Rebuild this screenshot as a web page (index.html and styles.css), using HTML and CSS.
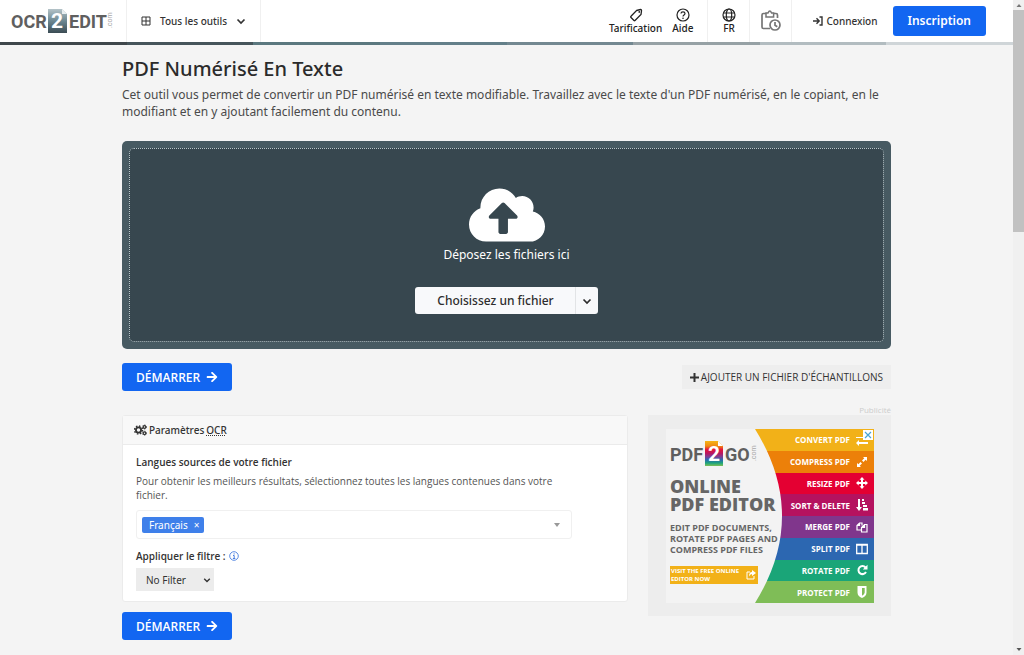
FILE: index.html
```html
<!DOCTYPE html>
<html lang="fr">
<head>
<meta charset="utf-8">
<title>PDF Numérisé En Texte</title>
<link rel="stylesheet" href="styles.css">
</head>
<body>
<svg class="defs" aria-hidden="true">
  <symbol id="arrow" viewBox="0 0 448 512"><path fill="currentColor" d="M190.500 66.900l22.200-22.200c9.400-9.400 24.600-9.400 33.900 0L441 239c9.400 9.400 9.400 24.600 0 33.900L246.600 467.300c-9.400 9.400-24.600 9.400-33.900 0l-22.200-22.200c-9.500-9.500-9.300-25 .4-34.300L311.400 296H24c-13.300 0-24-10.700-24-24v-32c0-13.300 10.700-24 24-24h287.400L190.900 101.200c-9.800-9.300-10-24.800-.4-34.300z"/></symbol>
  <symbol id="chevron" viewBox="0 0 10 10"><path d="M1.500 3.500 5 7l3.500-3.500" fill="none" stroke="currentColor" stroke-width="1.700"/></symbol>
</svg>
<div class="app">
  <div class="view">
    <header class="topbar">
      <a class="logo" href="#" aria-label="OCR2EDIT.com">
        <svg viewBox="0 0 104 26" width="104" height="26">
          <defs><linearGradient id="tile" x1="0" y1="0" x2="0" y2="1"><stop offset="0" stop-color="#b4c3c8"/><stop offset=".5" stop-color="#6c8791"/><stop offset="1" stop-color="#3b4c54"/></linearGradient></defs>
          <text x="1" y="20" class="logo-word">OCR</text>
          <path d="M38 1h14l5 5v19H38z" fill="url(#tile)"/><path d="M52 1v5h5z" fill="#e8eef0"/>
          <text x="47" y="20" text-anchor="middle" class="logo-digit">2</text>
          <text x="59" y="20" class="logo-word">EDIT</text>
          <text transform="translate(102 20) rotate(-90)" class="logo-com">.com</text>
        </svg>
      </a>
      <button class="tools" type="button">
        <svg width="10" height="10" viewBox="0 0 10 10"><path d="M1 1h8v8H1zM5 1v8M1 5h8" fill="none" stroke="currentColor"/></svg>
        <span>Tous les outils</span>
        <svg width="10" height="10"><use href="#chevron"/></svg>
      </button>
      <nav class="actions">
        <div class="links">
          <a href="#" class="stack"><svg width="14" height="14" viewBox="0 0 14 14"><path d="M7.500 2.500 11.500 1.500Q12.700 1.500 12.500 3L12 6.500 6 12.500Q5.500 13 5 12.500L2 9.500Q1.400 8.900 2 8.300z" fill="none" stroke="currentColor" stroke-width="1.300"/><circle cx="10.300" cy="3.900" r=".9" fill="currentColor"/></svg><span>Tarification</span></a>
          <a href="#" class="stack"><svg width="14" height="14" viewBox="0 0 14 14"><circle cx="7" cy="7" r="6" fill="none" stroke="currentColor" stroke-width="1.200"/><path d="M5 5.500C5 3.300 9 3.300 9 5.500 9 7 7 7 7 8.600" fill="none" stroke="currentColor" stroke-width="1.200"/><circle cx="7" cy="10.300" r=".8" fill="currentColor"/></svg><span>Aide</span></a>
        </div>
        <a href="#" class="stack cell"><svg width="14" height="14" viewBox="0 0 14 14"><g fill="none" stroke="currentColor" stroke-width="1.200"><circle cx="7" cy="7" r="6"/><ellipse cx="7" cy="7" rx="2.700" ry="6"/><path d="M1.500 5h11M1.500 9h11"/></g></svg><span>FR</span></a>
        <a href="#" class="cell" aria-label="Historique"><svg width="20" height="22" viewBox="0 0 20 22"><g fill="none" stroke="#757575" stroke-width="1.700"><path d="M9 18.500H2.500Q1 18.500 1 17V5Q1 3.500 2.500 3.500H15Q16.500 3.500 16.500 5V8"/><circle cx="14" cy="15" r="5"/><path d="M14 12v3.300l2.300 1.500"/></g><path d="M5 3h2q1.800-4 3.600 0h2v4H5z" fill="#fff" stroke="#757575" stroke-width="1.500"/></svg></a>
        <a href="#" class="login"><svg width="10" height="10" viewBox="0 0 10 10"><path d="M0 5h6M3.500 2.300 6.200 5 3.500 7.700M6.500 1H9v8H6.500" fill="none" stroke="currentColor" stroke-width="1.400"/></svg><span>Connexion</span></a>
        <a href="#" class="signup">Inscription</a>
      </nav>
    </header>
    <div class="stripe"><i class="s1"></i><i class="s2"></i><i class="s3"></i><i class="s4"></i><i class="s5"></i><i class="s6"></i><i class="s7"></i><i class="s8"></i></div>

    <main class="page">
      <h1>PDF Numérisé En Texte</h1>
      <p class="lead">Cet outil vous permet de convertir un PDF numérisé en texte modifiable. Travaillez avec le texte d'un PDF numérisé, en le copiant, en le modifiant et en y ajoutant facilement du contenu.</p>

      <section class="drop"><div class="drop-inner">
        <svg width="76" height="54" viewBox="0 32 640 448"><path fill="#fff" d="M537.600 226.600c4.100-10.700 6.400-22.400 6.400-34.600 0-53-43-96-96-96-19.700 0-38.100 6-53.300 16.200C367 64.200 315.300 32 256 32c-88.400 0-160 71.600-160 160 0 2.700.1 5.400.2 8.100C40.200 219.800 0 273.200 0 336c0 79.500 64.500 144 144 144h368c70.700 0 128-57.300 128-128 0-61.900-44-113.600-102.400-125.400zM393.400 288H328v112c0 8.800-7.200 16-16 16h-48c-8.800 0-16-7.200-16-16V288h-65.400c-14.300 0-21.400-17.200-11.300-27.400l105.400-105.400c6.200-6.200 16.400-6.200 22.600 0l105.400 105.400c10.100 10.100 2.900 27.400-11.300 27.400z"/></svg>
        <p>Déposez les fichiers ici</p>
        <div class="choose"><button type="button" class="choose-main">Choisissez un fichier</button><button type="button" class="choose-more" aria-label="Autres sources"><svg width="10" height="10"><use href="#chevron"/></svg></button></div>
      </div></section>

      <div class="row">
        <button type="button" class="start">DÉMARRER <svg width="12" height="12"><use href="#arrow"/></svg></button>
        <button type="button" class="sample"><svg width="9" height="9" viewBox="0 0 9 9"><path d="M4.500 0v9M0 4.500h9" stroke="currentColor" stroke-width="2"/></svg>AJOUTER UN FICHIER D'ÉCHANTILLONS</button>
      </div>

      <div class="columns">
        <div class="settings">
          <section class="panel">
            <h2><svg width="13" height="12" viewBox="0 0 13 12"><g fill="none" stroke="currentColor"><circle cx="4.500" cy="6" r="2.600" stroke-width="1.800"/><circle cx="4.500" cy="6" r="4" stroke-width="1.400" stroke-dasharray="1.570 1.570"/><circle cx="10.500" cy="3" r="1.300" stroke-width="1.200"/><circle cx="10.500" cy="3" r="2.100" stroke-width=".8" stroke-dasharray="1.100 1.100"/><circle cx="10.500" cy="9.200" r="1.300" stroke-width="1.200"/><circle cx="10.500" cy="9.200" r="2.100" stroke-width=".8" stroke-dasharray="1.100 1.100"/></g></svg>Paramètres <abbr title="Reconnaissance optique de caractères">OCR</abbr></h2>
            <div class="panel-body">
              <label class="field-label" for="lang">Langues sources de votre fichier</label>
              <p class="hint">Pour obtenir les meilleurs résultats, sélectionnez toutes les langues contenues dans votre fichier.</p>
              <div class="tags"><span class="tag">Français <button type="button" aria-label="Retirer Français">×</button></span><input id="lang" type="text"><svg width="6" height="4" viewBox="0 0 6 4"><path d="M0 0h6L3 4z" fill="#999"/></svg></div>
              <label class="field-label" for="filter">Appliquer le filtre : <svg width="10" height="10" viewBox="0 0 10 10"><g fill="none" stroke="#4a7fe0"><circle cx="5" cy="5" r="4.300" stroke-width=".9"/><path d="M4 4.500h1.200v3M3.900 7.500h2.400M5.100 2.300v1.200"/></g></svg></label>
              <div class="filter"><select id="filter"><option>No Filter</option></select><svg width="8" height="8"><use href="#chevron"/></svg></div>
            </div>
          </section>
          <button type="button" class="start">DÉMARRER <svg width="12" height="12"><use href="#arrow"/></svg></button>
        </div>
        <aside class="ad">
          <small>Publicité</small>
          <div class="ad-frame"><div class="banner">
            <div class="pitch">
              <svg viewBox="0 0 88 26" width="88" height="26" role="img" aria-label="PDF2GO.com">
                <defs><linearGradient id="rainbow" x1="0" y1="0" x2="0" y2="1"><stop offset="0" stop-color="#f5b517"/><stop offset=".2" stop-color="#f08a13"/><stop offset=".35" stop-color="#e3123b"/><stop offset=".5" stop-color="#b51863"/><stop offset=".62" stop-color="#823a90"/><stop offset=".75" stop-color="#2e68b2"/><stop offset=".88" stop-color="#1ba47c"/><stop offset="1" stop-color="#7fbf55"/></linearGradient></defs>
                <text x="0" y="20" class="logo-word">PDF</text>
                <path d="M35 0h13l5 5v20H35z" fill="url(#rainbow)"/><path d="M48 0v5h5z" fill="#fff"/>
                <text x="44" y="20" text-anchor="middle" class="logo-digit">2</text>
                <text x="55" y="20" class="logo-word">GO</text>
                <text transform="translate(86 20) rotate(-90)" class="logo-com">.com</text>
              </svg>
              <strong>ONLINE<br>PDF EDITOR</strong>
              <p>EDIT PDF DOCUMENTS,<br>ROTATE PDF PAGES AND<br>COMPRESS PDF FILES</p>
              <a href="#" class="visit"><span>VISIT THE FREE ONLINE<br>EDITOR NOW</span><svg width="10" height="10" viewBox="0 0 10 10"><path d="M4 2H1v7h7V6" fill="none" stroke="#fff"/><path d="M6 0l4 3-4 3V4Q4 4 3 6.500 3 2 6 2z" fill="#fff"/></svg></a>
            </div>
            <ul class="features">
              <li class="f1">CONVERT PDF<svg viewBox="0 0 12 12"><path d="M0 3h9V1l3 3H0zM12 8H3V6L0 9l3 3v-2h9z" fill="#fff"/></svg></li>
              <li class="f2">COMPRESS PDF<svg viewBox="0 0 12 12"><path d="M7 1h4v4L9.600 3.700 7.500 6 6 4.500 8.300 2.300zM5 11H1V7l1.400 1.300L4.500 6 6 7.500 3.700 9.700z" fill="#fff"/></svg></li>
              <li class="f3">RESIZE PDF<svg viewBox="0 0 12 12"><path d="M6 0l2.500 2.700H7V5h2.300V3.500L12 6 9.300 8.500V7H7v2.300h1.500L6 12 3.500 9.300H5V7H2.700v1.500L0 6l2.700-2.500V5H5V2.700H3.500z" fill="#fff"/></svg></li>
              <li class="f4">SORT &amp; DELETE<svg viewBox="0 0 12 12"><path d="M2 0h2v8h2l-3 4-3-4h2zM6 0h2v2H6zM6 3h3v2H6zM7 6h4v2H7zM7 9h5v2.500H7z" fill="#fff"/></svg></li>
              <li class="f5">MERGE PDF<svg viewBox="0 0 12 12"><g fill="none" stroke="#fff" stroke-width="1.200"><path d="M5 9H1V4.500L3.500 2H6v2.500M3.500 2v2.500H1"/><path d="M5.500 11V6.500l3-3H11V11zM8.500 3.500v3h-3"/></g></svg></li>
              <li class="f6">SPLIT PDF<svg viewBox="0 0 12 12"><path d="M.7 1.500h10.600v9H.7zM6 1.500v9M.7 2h10.600" fill="none" stroke="#fff" stroke-width="1.300"/></svg></li>
              <li class="f7">ROTATE PDF<svg viewBox="0 0 12 12"><path d="M9.500 3.500A4 4 0 1 0 10 8" fill="none" stroke="#fff" stroke-width="2"/><path d="M11.500.8V5.500H6.800z" fill="#fff"/></svg></li>
              <li class="f8">PROTECT PDF<svg viewBox="0 0 12 12"><path d="M1.500 0h9v6.500Q10.500 10 6 12 1.500 10 1.500 6.500zM6 2v7.700Q8.700 8.500 8.700 6.500V2z" fill="#fff" fill-rule="evenodd"/></svg></li>
            </ul>
            <button type="button" class="ad-close" aria-label="Fermer"><svg width="8" height="8" viewBox="0 0 8 8"><path d="M1 1l6 6M7 1 1 7" stroke="#4aa5d4" stroke-width="1.200"/></svg></button>
          </div></div>
        </aside>
      </div>
    </main>
  </div>
  <div class="scroll" aria-hidden="true"><svg width="10" height="10" viewBox="0 0 10 10"><path d="M2.500 7 5 4l2.500 3z" fill="#777"/></svg><i class="thumb"></i><svg width="10" height="10" viewBox="0 0 10 10"><path d="M2.500 3 5 6l2.500-3z" fill="#555"/></svg></div>
</div>
</body>
</html>
```
FILE: styles.css
```css
* { box-sizing: border-box; margin: 0; padding: 0; }
body { font-family: "Noto Sans", "Open Sans", sans-serif; font-size: 10px; color: #333; background: #f4f4f4; }
button, input, select { font: inherit; color: inherit; border: 0; background: none; }
a { color: inherit; text-decoration: none; }
svg { display: block; flex: none; }
.defs { position: absolute; width: 0; height: 0; }
.app { display: flex; min-height: 100vh; border-bottom: 1px solid #bbb; }
.view { flex: 1; min-width: 0; }
.topbar { display: flex; height: 42px; background: #fff; }
.logo { display: flex; align-items: center; width: 127px; padding-left: 10px; border-right: 1px solid #f0f0f0; }
.logo-word { font: 700 18px Roboto, sans-serif; fill: #5f5f5f; }
.logo-digit { font: 700 21px Roboto, sans-serif; fill: #fff; }
.logo-com { font: 400 7px Roboto, sans-serif; fill: #aaa; }
.tools { display: flex; align-items: center; gap: 9px; padding: 0 14px; border-right: 1px solid #f0f0f0; font-weight: 500; }
.actions { display: flex; flex: 1; justify-content: flex-end; align-items: center; padding-right: 27px; font-weight: 500; }
.links { display: flex; gap: 10px; height: 100%; padding-right: 14px; border-right: 1px solid #f0f0f0; }
.stack { display: flex; flex-direction: column; align-items: center; justify-content: center; line-height: 13px; color: #222; }
.cell { display: flex; align-items: center; justify-content: center; width: 42px; height: 100%; border-right: 1px solid #f0f0f0; }
.login { display: flex; align-items: center; gap: 3px; padding: 0 15px 0 21px; }
.signup { padding: 0 15px; line-height: 30px; border-radius: 3px; background: #1266f1; color: #fff; font-size: 12px; font-weight: 600; }
.stripe { display: flex; height: 3px; }
.stripe i { flex: 1; }
.s1 { background: #3f474b; } .s2 { background: #46555b; } .s3 { background: #5b787f; } .s4 { background: #637f89; }
.s5 { background: #738891; } .s6 { background: #96a1a5; } .s7 { background: #b2bcc0; } .s8 { background: #cfd5d8; }

.page { max-width: 801px; margin: 0 auto; padding: 11px 16px 15px; }
h1 { font-size: 20px; line-height: 26px; font-weight: 500; color: #2b2b2b; }
.lead { margin-top: 4px; font-size: 12px; line-height: 17px; color: #4a4a4a; }
.drop { margin-top: 21px; padding: 7px; border-radius: 5px; background: #475a62; }
.drop-inner { display: flex; flex-direction: column; align-items: center; padding: 39px 0 27px; border: 1px dotted #b9c6ca; border-radius: 5px; background: #37474f; color: #fff; }
.drop-inner p { margin-top: 4px; font-size: 12px; line-height: 18px; }
.choose { display: flex; height: 27px; margin-top: 23px; border-radius: 3px; background: #f8f9fb; color: #2d2d2d; overflow: hidden; }
.choose-main { padding: 0 21px 0 22px; font-size: 12px; font-weight: 500; }
.choose-more { padding: 0 6px; border-left: 1px solid #e2e4e6; }
.row { display: flex; justify-content: space-between; align-items: center; margin-top: 14px; }
.start { display: flex; align-items: center; align-self: flex-start; gap: 6px; height: 28px; padding: 0 14px; border-radius: 3px; background: #1266f1; color: #fff; font: 600 12px "Open Sans", sans-serif; }
.sample { display: flex; align-items: center; gap: 2px; height: 24px; padding: 0 8px; background: #eee; font: 10px "Open Sans", sans-serif; }
.columns { display: flex; gap: 20px; margin-top: 14px; }
.settings { flex: 1; min-width: 0; display: flex; flex-direction: column; gap: 10px; padding-top: 10px; }
.panel { border: 1px solid #ebebeb; border-radius: 3px; background: #fff; }
h2 { display: flex; align-items: center; gap: 2px; padding: 0 12px 0 11px; font-size: 10px; line-height: 28px; font-weight: 500; background: #f8f8f8; border-bottom: 1px solid #ebebeb; }
abbr { line-height: 13px; }
.panel-body { padding: 10px 55px 10px 13px; }
.field-label { display: flex; align-items: center; gap: 3px; font: 600 10px/14px "Open Sans", sans-serif; }
.hint { max-width: 420px; margin-top: 5px; font: 10px/14px "Open Sans", sans-serif; color: #555; }
.tags { display: flex; align-items: center; height: 29px; margin: 8px 0 10px; padding: 0 11px 0 5px; border: 1px solid #f0f0f0; border-radius: 3px; }
.tag { display: flex; align-items: center; gap: 6px; height: 16px; padding: 0 5px 0 7px; border-radius: 2px; background: #3f80ea; color: #fff; font-size: 10px; }
.tags input { flex: 1; min-width: 0; outline: 0; }
.filter { display: grid; width: 78px; margin-top: 5px; }
.filter select { grid-area: 1 / 1; height: 23px; padding: 0 10px; appearance: none; background: #ececec; font-size: 10px; }
.filter svg { grid-area: 1 / 1; place-self: center end; margin-right: 3px; pointer-events: none; }
.ad { display: flex; flex-direction: column; width: 243px; }
.ad small { font: 8px/10px "Open Sans", sans-serif; color: #ccc; text-align: right; }
.ad-frame { padding: 14px 17px 13px 18px; background: #ededed; }
.banner { position: relative; display: flex; height: 174px; background: #f3f3f3; font: 700 9px "Open Sans", sans-serif; overflow: hidden; color: #666; }
.pitch { width: 89px; padding: 12px 0 0 4px; white-space: nowrap; z-index: 1; }
.pitch strong { display: block; margin-top: 10px; font-size: 18px; line-height: 18px; }
.pitch p { margin-top: 9px; font-size: 9px; line-height: 11px; }
.visit { display: flex; align-items: center; justify-content: space-between; width: 88px; height: 18px; margin-top: 11px; padding: 0 2px 0 1px; background: #f2b118; color: #fff; font-size: 6px; line-height: 8px; }
.features { flex: 1; display: grid; grid-template-rows: repeat(8, 1fr); list-style: none; color: #fff; clip-path: path("M0 0Q54 87 0 174H130V0Z"); }
.features li { display: flex; align-items: center; justify-content: flex-end; gap: 6px; padding-right: 6px; font-size: 8px; }
.features svg { width: 12px; height: 12px; }
.f1 { background: #f2b118; } .f2 { background: #ec8009; } .f3 { background: #e40032; } .f4 { background: #b5125f; }
.f5 { background: #80368c; } .f6 { background: #2c67b1; } .f7 { background: #1aa578; } .f8 { background: #7fbd57; }
.ad-close { position: absolute; top: 1px; right: 1px; z-index: 2; padding: 1px; background: #fff; }
.scroll { display: flex; flex-direction: column; align-items: center; width: 11px; background: #f0f0f0; }
.thumb { width: 100%; height: 222px; margin-bottom: auto; background: #c1c1c1; }
```
